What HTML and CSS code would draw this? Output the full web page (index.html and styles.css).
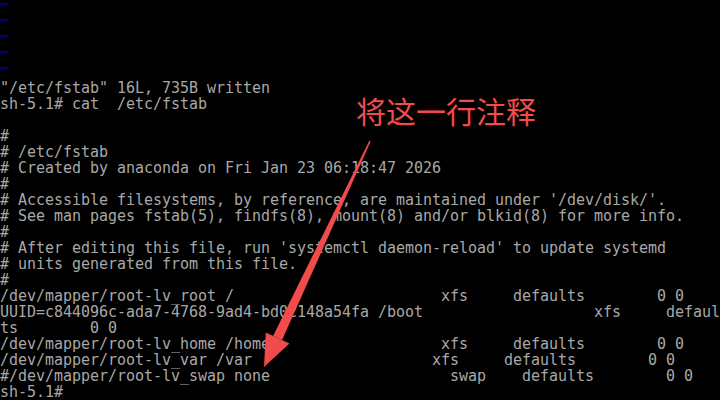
FILE: index.html
```html
<!DOCTYPE html>
<html lang="en">
<head>
  <meta charset="UTF-8">
  <meta name="viewport" content="width=device-width, initial-scale=1.0">
  <title>fstab console</title>
  <link rel="stylesheet" href="styles.css">
</head>
<body>
  <div class="console">
<pre class="screen"><span class="tilde">~</span>
<span class="tilde">~</span>
<span class="tilde">~</span>
<span class="tilde">~</span>
<span class="tilde">~</span>
"/etc/fstab" 16L, 735B written
sh-5.1# cat  /etc/fstab

#
# /etc/fstab
# Created by anaconda on Fri Jan 23 06:18:47 2026
#
# Accessible filesystems, by reference, are maintained under '/dev/disk/'.
# See man pages fstab(5), findfs(8), mount(8) and/or blkid(8) for more info.
#
# After editing this file, run 'systemctl daemon-reload' to update systemd
# units generated from this file.
#
/dev/mapper/root-lv_root /                       xfs     defaults        0 0
UUID=c844096c-ada7-4768-9ad4-bd0c148a54fa /boot                   xfs     defaul
ts        0 0
/dev/mapper/root-lv_home /home                   xfs     defaults        0 0
/dev/mapper/root-lv_var /var                    xfs     defaults        0 0
#/dev/mapper/root-lv_swap none                    swap    defaults        0 0
sh-5.1#</pre>

    <!-- Annotation overlay -->
    <div class="note">将这一行注释</div>
    <svg class="arrow" width="720" height="400" viewBox="0 0 720 400">
      <polygon points="370.7,141.3 369.3,140.7 273.1,335.9 282.1,340.1"/>
      <polygon points="264,367 265.8,332.5 289.4,343.5"/>
    </svg>
  </div>
</body>
</html>
```

FILE: styles.css
```css
/* Console */
body {
  margin: 0;
  background-color: #000000;
}

.console {
  position: relative;
  width: 720px;
  height: 400px;
  overflow: hidden;
  background-color: #000000;
}

.screen {
  margin: 0;
  font-family: 'DejaVu Sans Mono', monospace;
  font-size: 15px;
  letter-spacing: -0.03px;
  line-height: 16px;
  color: #a8a8a8;
}

.tilde {
  display: inline-block;
  color: #0000b4;
  transform: translateY(-4px);
}

/* Annotation */
.note {
  position: absolute;
  left: 356px;
  top: 95px;
  font-family: 'Noto Sans CJK SC', sans-serif;
  font-size: 30px;
  line-height: 30px;
  color: #f24b4b;
  white-space: nowrap;
}

.arrow {
  position: absolute;
  left: 0;
  top: 0;
}

.arrow polygon {
  fill: #f24b4b;
}
```
